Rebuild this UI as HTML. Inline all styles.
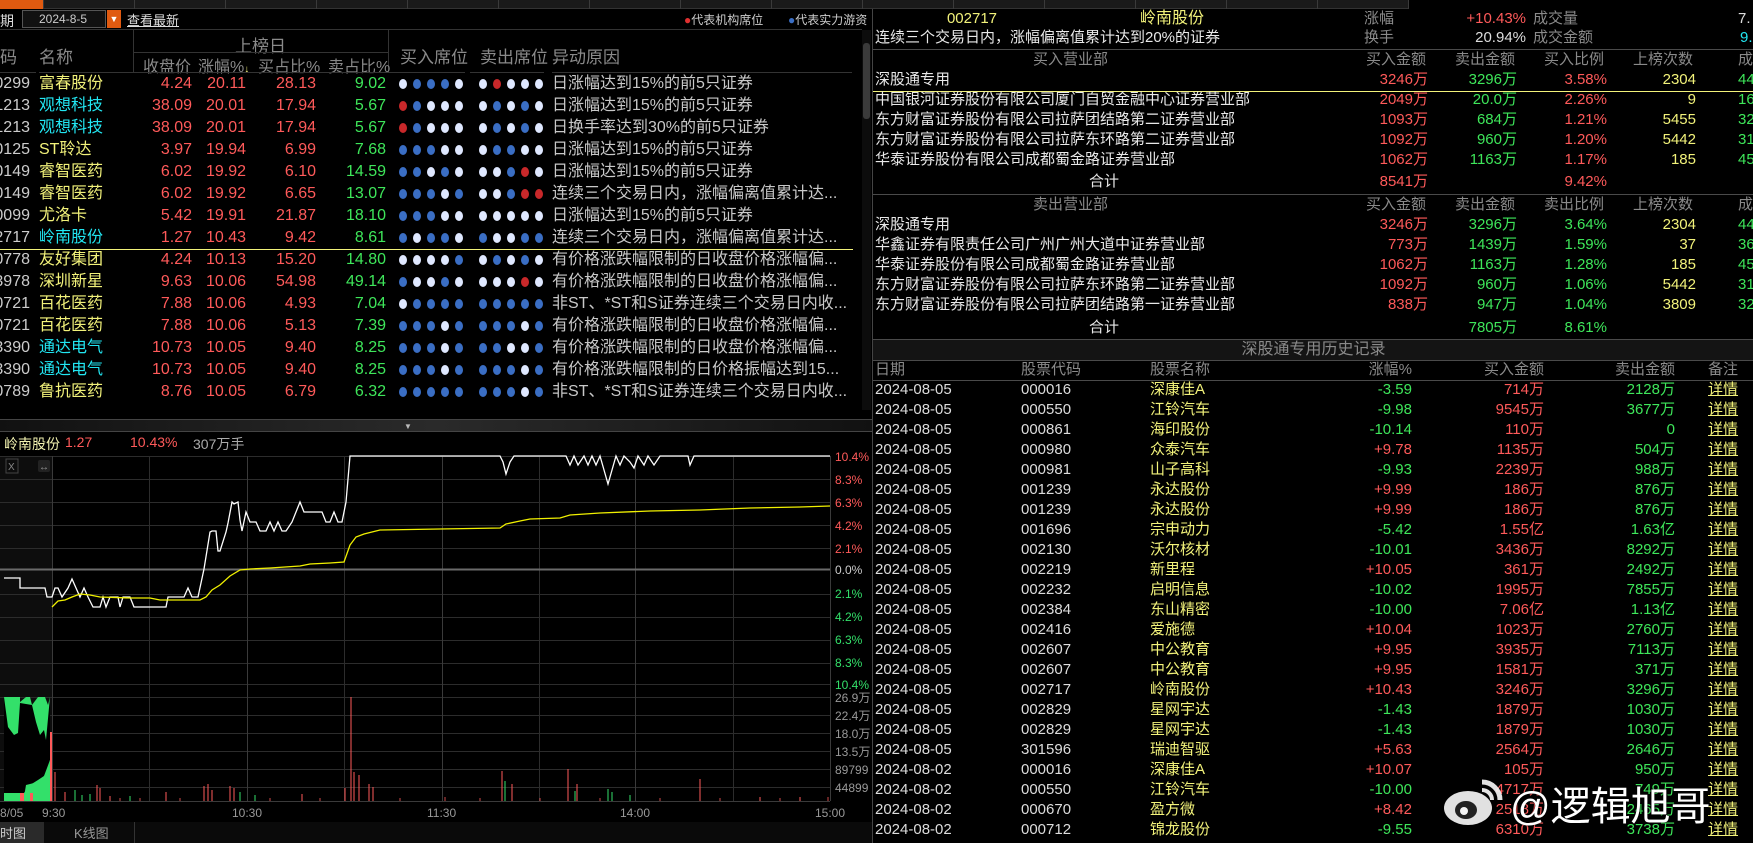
<!DOCTYPE html>
<html><head><meta charset="utf-8">
<style>
*{margin:0;padding:0;box-sizing:border-box}
body{width:1753px;height:843px;background:#000;overflow:hidden;position:relative;font-family:"Liberation Sans","WenQuanYi Zen Hei","Noto Sans CJK SC",sans-serif;font-size:15px;color:#ddd}
.abs{position:absolute;white-space:nowrap}
.tabs{position:absolute;left:0;top:0;width:1409px;height:9px;background:#1a1a1a;border-bottom:1px solid #333}
.tab{position:absolute;top:0;height:9px;width:91px;border-right:1px solid #3a3a3a}
#left{position:absolute;left:0;top:9px;width:872px;height:834px;overflow:hidden}
.r{position:absolute;left:0;width:862px;height:22px;line-height:22px;font-size:16px}
.r span{position:absolute;white-space:nowrap}
.c{left:-12px;width:42px;text-align:right;color:#ccc}
.n{left:39px;color:#f2f27a}
.cy{color:#22e6f2!important}
.a{left:140px;width:52px;text-align:right;color:#ff5a5a}
.b{left:190px;width:56px;text-align:right;color:#ff5a5a}
.d{left:256px;width:60px;text-align:right;color:#ff5a5a}
.e{left:326px;width:60px;text-align:right;color:#3ee65a}
.dt{left:399px;top:6px;height:10px;line-height:0}
.ds{left:479px;top:6px;height:10px;line-height:0}
.dt i,.ds i{display:inline-block;width:8px;height:10px;border-radius:50%;margin-right:6px}
i.B{background:#3a6ec4}i.W{background:#dfe8ff}i.R{background:#c8282a}
.t{left:552px;color:#c8c8c8}
.g{color:#8a8a8a}
#right{position:absolute;left:872px;top:9px;width:881px;height:834px;overflow:hidden;border-left:1px solid #444;font-size:15px}
.rr{position:absolute;left:0;width:881px;height:20px;line-height:20px}
.rr span{position:absolute;white-space:nowrap}
.nm{left:2px;color:#e8e8e8}
.ba{left:455px;width:100px;text-align:right;color:#ff5a5a}
.sa{left:544px;width:100px;text-align:right;color:#3ee65a}
.ra{left:634px;width:100px;text-align:right}
.ct{left:723px;width:100px;text-align:right;color:#f2f27a}
.lc{left:865px;color:#3ee65a}
.red{color:#ff5a5a}.grn{color:#3ee65a}.yel{color:#f2f27a}
.hr{position:absolute;left:0;width:881px;height:1px;background:#4a4a4a}
.h{position:absolute;left:0;width:881px;height:20px;line-height:20px}
.h span{position:absolute;white-space:nowrap}
.dte{left:2px;color:#ddd}
.cd{left:148px;color:#ddd}
.hn{left:277px;color:#f2f27a}
.pc{left:439px;width:100px;text-align:right}
.hb{left:571px;width:100px;text-align:right;color:#ff5a5a}
.hs{left:702px;width:100px;text-align:right;color:#3ee65a}
.xq{left:835px;color:#f2f27a;text-decoration:underline}
</style></head><body>
<div class="tabs">
<div class="tab" style="left:0;width:44px;background:#e05a10"></div>
<div class="tab" style="left:44px"></div><div class="tab" style="left:135px"></div><div class="tab" style="left:226px"></div><div class="tab" style="left:317px"></div><div class="tab" style="left:408px"></div><div class="tab" style="left:499px"></div><div class="tab" style="left:590px"></div><div class="tab" style="left:681px"></div><div class="tab" style="left:772px"></div><div class="tab" style="left:863px"></div><div class="tab" style="left:954px"></div><div class="tab" style="left:1045px"></div><div class="tab" style="left:1136px"></div><div class="tab" style="left:1227px"></div><div class="tab" style="left:1318px"></div>
</div>

<div id="left">
<div class="abs" style="left:0;top:2px;font-size:14px;color:#ddd">期</div>
<div class="abs" style="left:22px;top:1px;width:84px;height:18px;border:1px solid #555;background:#111;font-size:12px;color:#ccc;line-height:16px;padding-left:16px">2024-8-5</div>
<div class="abs" style="left:107px;top:1px;width:14px;height:18px;background:#e05a10;color:#fff;font-size:9px;line-height:18px;text-align:center">▼</div>
<div class="abs" style="left:127px;top:1px;font-size:13px;color:#ddd;text-decoration:underline">查看最新</div>
<div class="abs" style="left:684px;top:2px;font-size:12px;color:#ccc"><span style="color:#e03030">●</span>代表机构席位</div>
<div class="abs" style="left:788px;top:2px;font-size:12px;color:#ccc"><span style="color:#3a6ec4">●</span>代表实力游资</div>
<div class="abs" style="left:0;top:20px;width:862px;height:1px;background:#333"></div>
<div class="abs" style="left:0;top:34px;font-size:17px" ><span class="g">码</span></div>
<div class="abs g" style="left:39px;top:34px;font-size:17px">名称</div>
<div class="abs" style="left:133px;top:21px;width:1px;height:42px;background:#333"></div>
<div class="abs" style="left:388px;top:21px;width:1px;height:42px;background:#333"></div>
<div class="abs g" style="left:133px;top:23px;width:255px;text-align:center;font-size:17px">上榜日</div>
<div class="abs" style="left:133px;top:43px;width:255px;height:1px;background:#333"></div>
<div class="abs g" style="left:143px;top:44px;font-size:16px">收盘价</div>
<div class="abs g" style="left:198px;top:44px;font-size:16px">涨幅%<span style="color:#f2f27a;font-size:10px">↓</span></div>
<div class="abs g" style="left:258px;top:44px;font-size:16px">买占比%</div>
<div class="abs g" style="left:328px;top:44px;font-size:16px">卖占比%</div>
<div class="abs g" style="left:400px;top:34px;font-size:17px">买入席位</div>
<div class="abs g" style="left:480px;top:34px;font-size:17px">卖出席位</div>
<div class="abs g" style="left:552px;top:34px;font-size:17px">异动原因</div>
<div class="abs" style="left:0;top:63px;width:36px;height:1px;background:#333"></div>
<div class="abs" style="left:39px;top:63px;width:386px;height:1px;background:#333"></div>
<div class="abs" style="left:391px;top:63px;width:74px;height:1px;background:#333"></div>
<div class="abs" style="left:470px;top:63px;width:74px;height:1px;background:#333"></div>
<div class="abs" style="left:552px;top:63px;width:300px;height:1px;background:#333"></div>
<div class="abs" style="left:862px;top:21px;width:9px;height:380px;background:#0c0c0c"></div>
<div class="abs" style="left:863px;top:34px;width:7px;height:76px;background:#3a3a3a;border-radius:3px"></div>

<div class="r" style="top:64px"><span class="c">0299</span><span class="n">富春股份</span><span class="a">4.24</span><span class="b">20.11</span><span class="d">28.13</span><span class="e">9.02</span><span class="dt"><i class="W"></i><i class="B"></i><i class="B"></i><i class="B"></i><i class="W"></i></span><span class="ds"><i class="W"></i><i class="R"></i><i class="W"></i><i class="W"></i><i class="W"></i></span><span class="t">日涨幅达到15%的前5只证券</span></div>
<div class="r" style="top:86px"><span class="c">1213</span><span class="n cy">观想科技</span><span class="a">38.09</span><span class="b">20.01</span><span class="d">17.94</span><span class="e">5.67</span><span class="dt"><i class="R"></i><i class="B"></i><i class="W"></i><i class="W"></i><i class="W"></i></span><span class="ds"><i class="W"></i><i class="B"></i><i class="W"></i><i class="B"></i><i class="W"></i></span><span class="t">日涨幅达到15%的前5只证券</span></div>
<div class="r" style="top:108px"><span class="c">1213</span><span class="n cy">观想科技</span><span class="a">38.09</span><span class="b">20.01</span><span class="d">17.94</span><span class="e">5.67</span><span class="dt"><i class="R"></i><i class="B"></i><i class="W"></i><i class="W"></i><i class="W"></i></span><span class="ds"><i class="W"></i><i class="B"></i><i class="W"></i><i class="B"></i><i class="W"></i></span><span class="t">日换手率达到30%的前5只证券</span></div>
<div class="r" style="top:130px"><span class="c">0125</span><span class="n">ST聆达</span><span class="a">3.97</span><span class="b">19.94</span><span class="d">6.99</span><span class="e">7.68</span><span class="dt"><i class="B"></i><i class="B"></i><i class="B"></i><i class="W"></i><i class="W"></i></span><span class="ds"><i class="W"></i><i class="B"></i><i class="B"></i><i class="W"></i><i class="W"></i></span><span class="t">日涨幅达到15%的前5只证券</span></div>
<div class="r" style="top:152px"><span class="c">0149</span><span class="n">睿智医药</span><span class="a">6.02</span><span class="b">19.92</span><span class="d">6.10</span><span class="e">14.59</span><span class="dt"><i class="B"></i><i class="B"></i><i class="W"></i><i class="B"></i><i class="W"></i></span><span class="ds"><i class="W"></i><i class="W"></i><i class="B"></i><i class="R"></i><i class="W"></i></span><span class="t">日涨幅达到15%的前5只证券</span></div>
<div class="r" style="top:174px"><span class="c">0149</span><span class="n">睿智医药</span><span class="a">6.02</span><span class="b">19.92</span><span class="d">6.65</span><span class="e">13.07</span><span class="dt"><i class="B"></i><i class="B"></i><i class="B"></i><i class="W"></i><i class="B"></i></span><span class="ds"><i class="W"></i><i class="W"></i><i class="B"></i><i class="R"></i><i class="R"></i></span><span class="t">连续三个交易日内，涨幅偏离值累计达...</span></div>
<div class="r" style="top:196px"><span class="c">0099</span><span class="n">尤洛卡</span><span class="a">5.42</span><span class="b">19.91</span><span class="d">21.87</span><span class="e">18.10</span><span class="dt"><i class="B"></i><i class="B"></i><i class="B"></i><i class="W"></i><i class="W"></i></span><span class="ds"><i class="W"></i><i class="W"></i><i class="W"></i><i class="W"></i><i class="W"></i></span><span class="t">日涨幅达到15%的前5只证券</span></div>
<div class="r" style="top:218px"><span class="c">2717</span><span class="n cy">岭南股份</span><span class="a">1.27</span><span class="b">10.43</span><span class="d">9.42</span><span class="e">8.61</span><span class="dt"><i class="B"></i><i class="W"></i><i class="B"></i><i class="B"></i><i class="W"></i></span><span class="ds"><i class="B"></i><i class="W"></i><i class="W"></i><i class="B"></i><i class="B"></i></span><span class="t">连续三个交易日内，涨幅偏离值累计达...</span></div>
<div class="abs" style="left:0;top:240px;width:853px;height:1px;background:#f2f27a"></div>
<div class="r" style="top:240px"><span class="c">0778</span><span class="n">友好集团</span><span class="a">4.24</span><span class="b">10.13</span><span class="d">15.20</span><span class="e">14.80</span><span class="dt"><i class="W"></i><i class="W"></i><i class="W"></i><i class="W"></i><i class="B"></i></span><span class="ds"><i class="W"></i><i class="B"></i><i class="W"></i><i class="B"></i><i class="W"></i></span><span class="t">有价格涨跌幅限制的日收盘价格涨幅偏...</span></div>
<div class="r" style="top:262px"><span class="c">3978</span><span class="n">深圳新星</span><span class="a">9.63</span><span class="b">10.06</span><span class="d">54.98</span><span class="e">49.14</span><span class="dt"><i class="B"></i><i class="W"></i><i class="W"></i><i class="B"></i><i class="W"></i></span><span class="ds"><i class="W"></i><i class="W"></i><i class="W"></i><i class="R"></i><i class="W"></i></span><span class="t">有价格涨跌幅限制的日收盘价格涨幅偏...</span></div>
<div class="r" style="top:284px"><span class="c">0721</span><span class="n">百花医药</span><span class="a">7.88</span><span class="b">10.06</span><span class="d">4.93</span><span class="e">7.04</span><span class="dt"><i class="W"></i><i class="B"></i><i class="B"></i><i class="B"></i><i class="B"></i></span><span class="ds"><i class="B"></i><i class="B"></i><i class="B"></i><i class="B"></i><i class="B"></i></span><span class="t">非ST、*ST和S证券连续三个交易日内收...</span></div>
<div class="r" style="top:306px"><span class="c">0721</span><span class="n">百花医药</span><span class="a">7.88</span><span class="b">10.06</span><span class="d">5.13</span><span class="e">7.39</span><span class="dt"><i class="B"></i><i class="B"></i><i class="B"></i><i class="W"></i><i class="B"></i></span><span class="ds"><i class="B"></i><i class="B"></i><i class="B"></i><i class="W"></i><i class="B"></i></span><span class="t">有价格涨跌幅限制的日收盘价格涨幅偏...</span></div>
<div class="r" style="top:328px"><span class="c">3390</span><span class="n cy">通达电气</span><span class="a">10.73</span><span class="b">10.05</span><span class="d">9.40</span><span class="e">8.25</span><span class="dt"><i class="B"></i><i class="B"></i><i class="B"></i><i class="W"></i><i class="B"></i></span><span class="ds"><i class="B"></i><i class="B"></i><i class="W"></i><i class="W"></i><i class="B"></i></span><span class="t">有价格涨跌幅限制的日收盘价格涨幅偏...</span></div>
<div class="r" style="top:350px"><span class="c">3390</span><span class="n cy">通达电气</span><span class="a">10.73</span><span class="b">10.05</span><span class="d">9.40</span><span class="e">8.25</span><span class="dt"><i class="B"></i><i class="B"></i><i class="B"></i><i class="W"></i><i class="B"></i></span><span class="ds"><i class="B"></i><i class="B"></i><i class="B"></i><i class="W"></i><i class="B"></i></span><span class="t">有价格涨跌幅限制的日价格振幅达到15...</span></div>
<div class="r" style="top:372px"><span class="c">0789</span><span class="n">鲁抗医药</span><span class="a">8.76</span><span class="b">10.05</span><span class="d">6.79</span><span class="e">6.32</span><span class="dt"><i class="B"></i><i class="B"></i><i class="B"></i><i class="B"></i><i class="B"></i></span><span class="ds"><i class="B"></i><i class="B"></i><i class="B"></i><i class="W"></i><i class="B"></i></span><span class="t">非ST、*ST和S证券连续三个交易日内收...</span></div>

<div class="abs" style="left:0;top:410px;width:872px;height:1px;background:#444"></div>
<div class="abs" style="left:0;top:411px;width:872px;height:11px;background:linear-gradient(90deg,#111,#2a2a2a 50%,#111)"></div>
<div class="abs" style="left:404px;top:413px;color:#bbb;font-size:8px">▼</div>
<div class="abs" style="left:0;top:422px;width:872px;height:1px;background:#444"></div>
<div class="abs" style="left:4px;top:425px;font-size:14px;color:#f2f2b0">岭南股份</div>
<div class="abs" style="left:65px;top:425px;font-size:14px;color:#ff5a5a">1.27</div>
<div class="abs" style="left:130px;top:425px;font-size:14px;color:#ff5a5a">10.43%</div>
<div class="abs" style="left:193px;top:425px;font-size:14px;color:#aaa">307万手</div>
</div>

<svg class="abs" style="left:0;top:0" width="872" height="843" viewBox="0 0 872 843">
<rect x="0" y="456" width="52" height="345" fill="#0d0d0d"/>
<g stroke="#2c2c2c" stroke-width="1">
<line x1="0" y1="456.5" x2="830" y2="456.5"/><line x1="0" y1="479.5" x2="830" y2="479.5"/><line x1="0" y1="502.5" x2="830" y2="502.5"/><line x1="0" y1="525.5" x2="830" y2="525.5"/><line x1="0" y1="548.5" x2="830" y2="548.5"/><line x1="0" y1="594.5" x2="830" y2="594.5"/><line x1="0" y1="617.5" x2="830" y2="617.5"/><line x1="0" y1="640.5" x2="830" y2="640.5"/><line x1="0" y1="663.5" x2="830" y2="663.5"/><line x1="0" y1="684.5" x2="830" y2="684.5"/>
<line x1="0" y1="697.5" x2="830" y2="697.5"/><line x1="0" y1="715.5" x2="830" y2="715.5"/><line x1="0" y1="733.5" x2="830" y2="733.5"/><line x1="0" y1="751.5" x2="830" y2="751.5"/><line x1="0" y1="769.5" x2="830" y2="769.5"/><line x1="0" y1="787.5" x2="830" y2="787.5"/>
<line x1="149.5" y1="456" x2="149.5" y2="801"/><line x1="344.5" y1="456" x2="344.5" y2="801"/><line x1="539.5" y1="456" x2="539.5" y2="801"/><line x1="733.5" y1="456" x2="733.5" y2="801"/>
</g>
<g stroke="#3a3a3a" stroke-width="1">
<line x1="52.5" y1="456" x2="52.5" y2="801"/><line x1="247.5" y1="456" x2="247.5" y2="801"/><line x1="442.5" y1="456" x2="442.5" y2="801"/><line x1="635.5" y1="456" x2="635.5" y2="801"/><line x1="830.5" y1="456" x2="830.5" y2="801"/>
<line x1="0" y1="801.5" x2="830" y2="801.5"/>
</g>
<line x1="0" y1="569.5" x2="830" y2="569.5" stroke="#6a6a6a" stroke-width="2"/>
<rect x="6" y="459" width="12" height="14" fill="none" stroke="#444"/><text x="8" y="470" font-size="10" fill="#888">X</text>
<rect x="38" y="460" width="12" height="12" fill="#222" rx="2"/><text x="39" y="470" font-size="10" fill="#999">↔</text>
<polyline fill="none" stroke="#ffffff" stroke-width="1.3" points="4,578 20,578 20,588 45,588 47,597 52,597 55,588 58,588 62,597 68,588 72,579 76,588 80,597 84,588 88,597 93,607 100,607 103,597 106,607 110,597 114,597 118,597 120,607 123,597 130,597 134,607 150,607 166,607 168,597 184,597 188,588 192,597 198,597 204,569 210,532 212,531 216,531 218,551 220,551 226,532 228,523 232,502 234,504 238,502 240,520 242,531 246,512 250,522 256,522 260,531 266,531 270,522 274,531 278,522 282,531 286,531 292,522 300,502 304,512 322,512 326,522 330,522 334,512 338,522 342,522 346,502 350,456 354,456 500,456 503,462 506,474 510,462 514,456 566,456 570,465 574,456 578,465 584,456 588,465 592,456 596,465 600,456 604,470 608,484 612,470 616,456 620,465 624,456 630,462 634,468 638,456 644,465 648,456 654,465 660,456 688,456 690,465 694,456 830,456"/>
<polyline fill="none" stroke="#f0f000" stroke-width="1.3" points="52,607 58,601 65,600 72,597 80,594 90,595 100,597 130,598 150,598 160,600 200,600 206,597 212,590 220,585 230,576 240,570 250,569 270,568 300,566 310,564 330,563 344,562 350,545 356,537 364,534 380,530 440,529 500,528 506,524 520,521 530,519 560,518 570,515 600,513 650,511 700,510 750,508 800,507 830,506"/>
<path d="M4,697 L20,697 L20,702 L26,697 L30,697 L32,705 L38,697 L45,697 L48,705 L50,697 L50,801 L4,801 Z" fill="#33e06a"/>
<path d="M4,697 L8,727 L14,735 L18,733 L20,703 L32,705 L36,722 L40,735 L44,730 L46,740 L50,697 L50,760 L44,776 L38,780 L30,785 L24,793 L4,793 Z" fill="#000"/>
<path d="M4,797 L24,797 L26,785 L34,783 L42,779 L48,770 L50,760 L50,801 L4,801 Z" fill="#33e06a"/>
<rect x="20" y="793" width="4" height="8" fill="#ff5a5a"/><rect x="30" y="793" width="3" height="8" fill="#ff5a5a"/><rect x="50" y="732" width="2" height="69" fill="#ff5a5a"/>
<g stroke-width="1">
<g stroke="#ff5a5a">
<line x1="55" y1="801" x2="55" y2="772"/><line x1="65" y1="801" x2="65" y2="792"/><line x1="97" y1="801" x2="97" y2="785"/><line x1="100" y1="801" x2="100" y2="788"/><line x1="110" y1="801" x2="110" y2="796"/><line x1="166" y1="801" x2="166" y2="792"/><line x1="204" y1="801" x2="204" y2="786"/><line x1="208" y1="801" x2="208" y2="784"/><line x1="212" y1="801" x2="212" y2="790"/><line x1="230" y1="801" x2="230" y2="786"/><line x1="234" y1="801" x2="234" y2="788"/><line x1="302" y1="801" x2="302" y2="794"/><line x1="345" y1="801" x2="345" y2="788"/><line x1="351" y1="801" x2="351" y2="697"/><line x1="354" y1="801" x2="354" y2="772"/><line x1="359" y1="801" x2="359" y2="775"/><line x1="369" y1="801" x2="369" y2="784"/><line x1="373" y1="801" x2="373" y2="787"/><line x1="502" y1="801" x2="502" y2="771"/><line x1="512" y1="801" x2="512" y2="784"/><line x1="568" y1="801" x2="568" y2="769"/><line x1="577" y1="801" x2="577" y2="784"/><line x1="700" y1="801" x2="700" y2="779"/><line x1="760" y1="801" x2="760" y2="797"/><line x1="800" y1="801" x2="800" y2="797"/>
</g>
<g stroke="#33e06a">
<line x1="75" y1="801" x2="75" y2="790"/><line x1="82" y1="801" x2="82" y2="795"/><line x1="90" y1="801" x2="90" y2="794"/><line x1="130" y1="801" x2="130" y2="796"/><line x1="240" y1="801" x2="240" y2="792"/><line x1="255" y1="801" x2="255" y2="795"/><line x1="505" y1="801" x2="505" y2="781"/><line x1="575" y1="801" x2="575" y2="791"/><line x1="608" y1="801" x2="608" y2="789"/><line x1="612" y1="801" x2="612" y2="792"/><line x1="630" y1="801" x2="630" y2="795"/>
</g>
<g stroke="#ff5a5a" opacity="0.8">
<line x1="120" y1="801" x2="120" y2="798"/><line x1="140" y1="801" x2="140" y2="798"/><line x1="180" y1="801" x2="180" y2="798"/><line x1="270" y1="801" x2="270" y2="798"/><line x1="320" y1="801" x2="320" y2="798"/><line x1="400" y1="801" x2="400" y2="798"/><line x1="445" y1="801" x2="445" y2="797"/><line x1="480" y1="801" x2="480" y2="798"/><line x1="540" y1="801" x2="540" y2="798"/><line x1="600" y1="801" x2="600" y2="798"/><line x1="660" y1="801" x2="660" y2="798"/><line x1="720" y1="801" x2="720" y2="798"/><line x1="780" y1="801" x2="780" y2="798"/><line x1="828" y1="801" x2="828" y2="797"/>
</g>
</g>
<g font-size="12" font-family="Liberation Sans,sans-serif">
<text x="835" y="461" fill="#ff5a5a">10.4%</text><text x="835" y="484" fill="#ff5a5a">8.3%</text><text x="835" y="507" fill="#ff5a5a">6.3%</text><text x="835" y="530" fill="#ff5a5a">4.2%</text><text x="835" y="553" fill="#ff5a5a">2.1%</text><text x="835" y="574" fill="#ccc">0.0%</text><text x="835" y="598" fill="#33e06a">2.1%</text><text x="835" y="621" fill="#33e06a">4.2%</text><text x="835" y="644" fill="#33e06a">6.3%</text><text x="835" y="667" fill="#33e06a">8.3%</text><text x="835" y="689" fill="#33e06a">10.4%</text>
<text x="835" y="702" fill="#999" font-family="Liberation Sans,WenQuanYi Zen Hei,sans-serif">26.9万</text><text x="835" y="720" fill="#999" font-family="Liberation Sans,WenQuanYi Zen Hei,sans-serif">22.4万</text><text x="835" y="738" fill="#999" font-family="Liberation Sans,WenQuanYi Zen Hei,sans-serif">18.0万</text><text x="835" y="756" fill="#999" font-family="Liberation Sans,WenQuanYi Zen Hei,sans-serif">13.5万</text><text x="835" y="774" fill="#999">89799</text><text x="835" y="792" fill="#999">44899</text>
<text x="0" y="817" fill="#999">8/05</text><text x="42" y="817" fill="#999">9:30</text><text x="232" y="817" fill="#999">10:30</text><text x="427" y="817" fill="#999">11:30</text><text x="620" y="817" fill="#999">14:00</text><text x="815" y="817" fill="#999">15:00</text>
</g>
<rect x="0" y="822" width="872" height="21" fill="#0a0a0a"/>
<rect x="0" y="822" width="44" height="21" fill="#2a2a2a"/>
<line x1="134.5" y1="822" x2="134.5" y2="843" stroke="#333"/>
<text x="0" y="838" font-size="13" fill="#ccc" font-family="WenQuanYi Zen Hei,sans-serif">时图</text>
<text x="74" y="838" font-size="13" fill="#999" font-family="Liberation Sans,WenQuanYi Zen Hei,sans-serif">K线图</text>
</svg>

<div id="right">
<div class="rr" style="top:0px"><span class="yel" style="left:69px;width:60px;text-align:center">002717</span><span class="yel" style="left:259px;width:80px;text-align:center;font-size:16px">岭南股份</span><span class="g" style="left:491px">涨幅</span><span class="red" style="left:553px;width:100px;text-align:right">+10.43%</span><span class="g" style="left:660px">成交量</span><span style="left:865px;color:#ddd">7.</span></div>
<div class="rr" style="top:19px"><span style="left:2px;color:#e8e8e8">连续三个交易日内，涨幅偏离值累计达到20%的证券</span><span class="g" style="left:491px">换手</span><span style="left:553px;width:100px;text-align:right;color:#ddd">20.94%</span><span class="g" style="left:660px">成交金额</span><span style="left:867px;color:#22e6f2">9.</span></div>
<div class="hr" style="top:40px"></div>
<div class="rr" style="top:41px"><span class="g" style="left:160px">买入营业部</span><span class="g" style="left:493px">买入金额</span><span class="g" style="left:582px">卖出金额</span><span class="g" style="left:671px">买入比例</span><span class="g" style="left:760px">上榜次数</span><span class="g" style="left:865px">成</span></div>
<div class="rr" style="top:61px"><span class="nm">深股通专用</span><span class="ba">3246万</span><span class="sa">3296万</span><span class="ra red">3.58%</span><span class="ct">2304</span><span class="lc">44</span></div>
<div class="abs" style="left:0;top:82px;width:881px;height:1px;background:#f2f27a"></div>
<div class="rr" style="top:81px"><span class="nm">中国银河证券股份有限公司厦门自贸金融中心证券营业部</span><span class="ba">2049万</span><span class="sa">20.0万</span><span class="ra red">2.26%</span><span class="ct">9</span><span class="lc">16</span></div>
<div class="rr" style="top:101px"><span class="nm">东方财富证券股份有限公司拉萨团结路第二证券营业部</span><span class="ba">1093万</span><span class="sa">684万</span><span class="ra red">1.21%</span><span class="ct">5455</span><span class="lc">32</span></div>
<div class="rr" style="top:121px"><span class="nm">东方财富证券股份有限公司拉萨东环路第二证券营业部</span><span class="ba">1092万</span><span class="sa">960万</span><span class="ra red">1.20%</span><span class="ct">5442</span><span class="lc">31</span></div>
<div class="rr" style="top:141px"><span class="nm">华泰证券股份有限公司成都蜀金路证券营业部</span><span class="ba">1062万</span><span class="sa">1163万</span><span class="ra red">1.17%</span><span class="ct">185</span><span class="lc">45</span></div>
<div class="rr" style="top:163px"><span class="nm" style="left:216px">合计</span><span class="ba">8541万</span><span class="ra red">9.42%</span></div>
<div class="hr" style="top:185px"></div>
<div class="rr" style="top:186px"><span class="g" style="left:160px">卖出营业部</span><span class="g" style="left:493px">买入金额</span><span class="g" style="left:582px">卖出金额</span><span class="g" style="left:671px">卖出比例</span><span class="g" style="left:760px">上榜次数</span><span class="g" style="left:865px">成</span></div>
<div class="rr" style="top:206px"><span class="nm">深股通专用</span><span class="ba">3246万</span><span class="sa">3296万</span><span class="ra grn">3.64%</span><span class="ct">2304</span><span class="lc">44</span></div>
<div class="rr" style="top:226px"><span class="nm">华鑫证券有限责任公司广州广州大道中证券营业部</span><span class="ba">773万</span><span class="sa">1439万</span><span class="ra grn">1.59%</span><span class="ct">37</span><span class="lc">36</span></div>
<div class="rr" style="top:246px"><span class="nm">华泰证券股份有限公司成都蜀金路证券营业部</span><span class="ba">1062万</span><span class="sa">1163万</span><span class="ra grn">1.28%</span><span class="ct">185</span><span class="lc">45</span></div>
<div class="rr" style="top:266px"><span class="nm">东方财富证券股份有限公司拉萨东环路第二证券营业部</span><span class="ba">1092万</span><span class="sa">960万</span><span class="ra grn">1.06%</span><span class="ct">5442</span><span class="lc">31</span></div>
<div class="rr" style="top:286px"><span class="nm">东方财富证券股份有限公司拉萨团结路第一证券营业部</span><span class="ba">838万</span><span class="sa">947万</span><span class="ra grn">1.04%</span><span class="ct">3809</span><span class="lc">32</span></div>
<div class="rr" style="top:309px"><span class="nm" style="left:216px">合计</span><span class="sa">7805万</span><span class="ra grn">8.61%</span></div>
<div class="hr" style="top:330px"></div>
<div class="rr" style="top:331px;background:#141414"><span class="g" style="left:0;width:881px;text-align:center;font-size:16px">深股通专用历史记录</span></div>
<div class="hr" style="top:351px"></div>
<div class="h" style="top:351px"><span class="g" style="left:2px">日期</span><span class="g" style="left:148px">股票代码</span><span class="g" style="left:277px">股票名称</span><span class="g pc">涨幅%</span><span class="g" style="left:611px">买入金额</span><span class="g" style="left:742px">卖出金额</span><span class="g" style="left:835px">备注</span></div>
<div class="hr" style="top:371px"></div>
<div class="h" style="top:371px"><span class="dte">2024-08-05</span><span class="cd">000016</span><span class="hn">深康佳A</span><span class="pc grn">-3.59</span><span class="hb">714万</span><span class="hs">2128万</span><span class="xq">详情</span></div>
<div class="h" style="top:391px"><span class="dte">2024-08-05</span><span class="cd">000550</span><span class="hn">江铃汽车</span><span class="pc grn">-9.98</span><span class="hb">9545万</span><span class="hs">3677万</span><span class="xq">详情</span></div>
<div class="h" style="top:411px"><span class="dte">2024-08-05</span><span class="cd">000861</span><span class="hn">海印股份</span><span class="pc grn">-10.14</span><span class="hb">110万</span><span class="hs">0</span><span class="xq">详情</span></div>
<div class="h" style="top:431px"><span class="dte">2024-08-05</span><span class="cd">000980</span><span class="hn">众泰汽车</span><span class="pc red">+9.78</span><span class="hb">1135万</span><span class="hs">504万</span><span class="xq">详情</span></div>
<div class="h" style="top:451px"><span class="dte">2024-08-05</span><span class="cd">000981</span><span class="hn">山子高科</span><span class="pc grn">-9.93</span><span class="hb">2239万</span><span class="hs">988万</span><span class="xq">详情</span></div>
<div class="h" style="top:471px"><span class="dte">2024-08-05</span><span class="cd">001239</span><span class="hn">永达股份</span><span class="pc red">+9.99</span><span class="hb">186万</span><span class="hs">876万</span><span class="xq">详情</span></div>
<div class="h" style="top:491px"><span class="dte">2024-08-05</span><span class="cd">001239</span><span class="hn">永达股份</span><span class="pc red">+9.99</span><span class="hb">186万</span><span class="hs">876万</span><span class="xq">详情</span></div>
<div class="h" style="top:511px"><span class="dte">2024-08-05</span><span class="cd">001696</span><span class="hn">宗申动力</span><span class="pc grn">-5.42</span><span class="hb">1.55亿</span><span class="hs">1.63亿</span><span class="xq">详情</span></div>
<div class="h" style="top:531px"><span class="dte">2024-08-05</span><span class="cd">002130</span><span class="hn">沃尔核材</span><span class="pc grn">-10.01</span><span class="hb">3436万</span><span class="hs">8292万</span><span class="xq">详情</span></div>
<div class="h" style="top:551px"><span class="dte">2024-08-05</span><span class="cd">002219</span><span class="hn">新里程</span><span class="pc red">+10.05</span><span class="hb">361万</span><span class="hs">2492万</span><span class="xq">详情</span></div>
<div class="h" style="top:571px"><span class="dte">2024-08-05</span><span class="cd">002232</span><span class="hn">启明信息</span><span class="pc grn">-10.02</span><span class="hb">1995万</span><span class="hs">7855万</span><span class="xq">详情</span></div>
<div class="h" style="top:591px"><span class="dte">2024-08-05</span><span class="cd">002384</span><span class="hn">东山精密</span><span class="pc grn">-10.00</span><span class="hb">7.06亿</span><span class="hs">1.13亿</span><span class="xq">详情</span></div>
<div class="h" style="top:611px"><span class="dte">2024-08-05</span><span class="cd">002416</span><span class="hn">爱施德</span><span class="pc red">+10.04</span><span class="hb">1023万</span><span class="hs">2760万</span><span class="xq">详情</span></div>
<div class="h" style="top:631px"><span class="dte">2024-08-05</span><span class="cd">002607</span><span class="hn">中公教育</span><span class="pc red">+9.95</span><span class="hb">3935万</span><span class="hs">7113万</span><span class="xq">详情</span></div>
<div class="h" style="top:651px"><span class="dte">2024-08-05</span><span class="cd">002607</span><span class="hn">中公教育</span><span class="pc red">+9.95</span><span class="hb">1581万</span><span class="hs">371万</span><span class="xq">详情</span></div>
<div class="h" style="top:671px"><span class="dte">2024-08-05</span><span class="cd">002717</span><span class="hn">岭南股份</span><span class="pc red">+10.43</span><span class="hb">3246万</span><span class="hs">3296万</span><span class="xq">详情</span></div>
<div class="h" style="top:691px"><span class="dte">2024-08-05</span><span class="cd">002829</span><span class="hn">星网宇达</span><span class="pc grn">-1.43</span><span class="hb">1879万</span><span class="hs">1030万</span><span class="xq">详情</span></div>
<div class="h" style="top:711px"><span class="dte">2024-08-05</span><span class="cd">002829</span><span class="hn">星网宇达</span><span class="pc grn">-1.43</span><span class="hb">1879万</span><span class="hs">1030万</span><span class="xq">详情</span></div>
<div class="h" style="top:731px"><span class="dte">2024-08-05</span><span class="cd">301596</span><span class="hn">瑞迪智驱</span><span class="pc red">+5.63</span><span class="hb">2564万</span><span class="hs">2646万</span><span class="xq">详情</span></div>
<div class="h" style="top:751px"><span class="dte">2024-08-02</span><span class="cd">000016</span><span class="hn">深康佳A</span><span class="pc red">+10.07</span><span class="hb">105万</span><span class="hs">950万</span><span class="xq">详情</span></div>
<div class="h" style="top:771px"><span class="dte">2024-08-02</span><span class="cd">000550</span><span class="hn">江铃汽车</span><span class="pc grn">-10.00</span><span class="hb">4717万</span><span class="hs">749万</span><span class="xq">详情</span></div>
<div class="h" style="top:791px"><span class="dte">2024-08-02</span><span class="cd">000670</span><span class="hn">盈方微</span><span class="pc red">+8.42</span><span class="hb">2518万</span><span class="hs">2465万</span><span class="xq">详情</span></div>
<div class="h" style="top:811px"><span class="dte">2024-08-02</span><span class="cd">000712</span><span class="hn">锦龙股份</span><span class="pc grn">-9.55</span><span class="hb">6310万</span><span class="hs">3738万</span><span class="xq">详情</span></div>
</div>

<svg class="abs" style="left:1442px;top:776px" width="64" height="52" viewBox="0 0 64 52">
<ellipse cx="26" cy="32" rx="24" ry="17" fill="#f4f4f4" opacity="0.92"/>
<ellipse cx="24" cy="34" rx="11" ry="9" fill="#222"/>
<circle cx="22" cy="35" r="4" fill="#f4f4f4"/>
<path d="M40 6 A18 18 0 0 1 58 24" stroke="#f4f4f4" stroke-width="5" fill="none" opacity="0.92"/>
<path d="M40 14 A10 10 0 0 1 50 24" stroke="#f4f4f4" stroke-width="4" fill="none" opacity="0.92"/>
</svg>
<div class="abs" style="left:1510px;top:774px;font-size:40px;color:#fff;font-family:'Liberation Sans','WenQuanYi Zen Hei',sans-serif;text-shadow:0 0 2px #000">@逻辑旭哥</div>
</body></html>
